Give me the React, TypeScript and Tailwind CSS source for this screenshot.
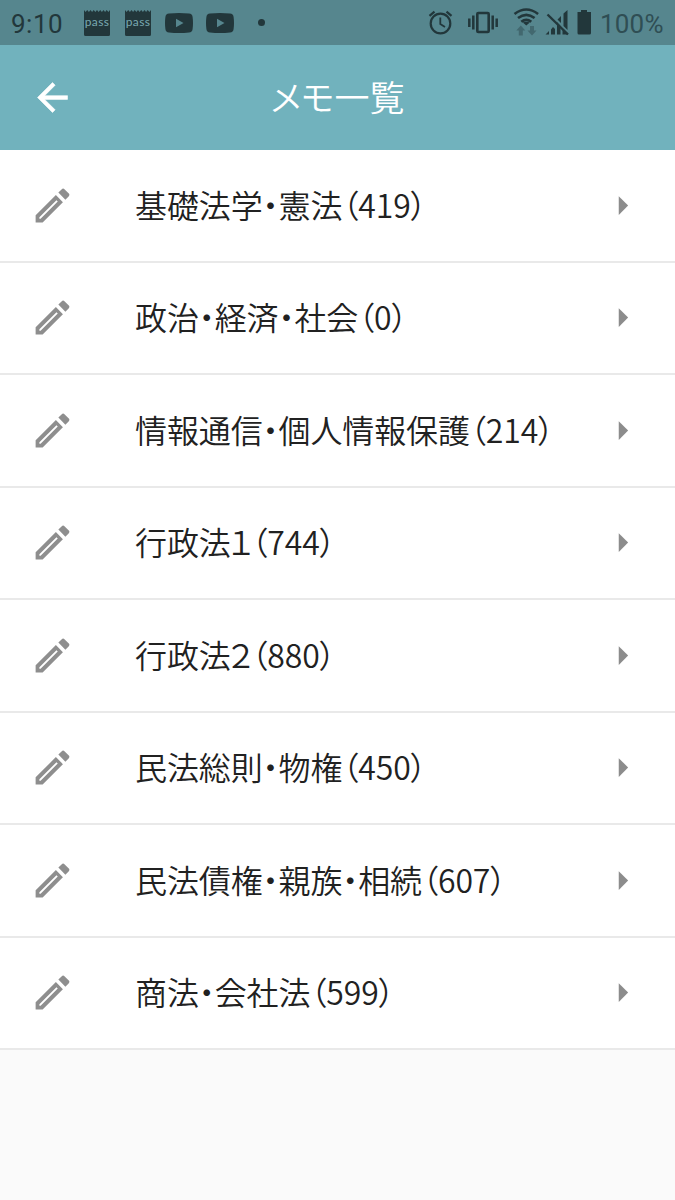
import React from 'react';

const memos = [
  { title: '基礎法学・憲法', count: 419 },
  { title: '政治・経済・社会', count: 0 },
  { title: '情報通信・個人情報保護', count: 214 },
  { title: '行政法', volume: '１', count: 744 },
  { title: '行政法', volume: '２', count: 880 },
  { title: '民法総則・物権', count: 450 },
  { title: '民法債権・親族・相続', count: 607 },
  { title: '商法・会社法', count: 599 },
];

const PassIcon: React.FC = () => (
  <div className="relative h-[26px] w-[26px]">
    <svg viewBox="0 0 26 26" className="h-[26px] w-[26px]" fill="currentColor">
      <path d="M0 0l1.600 2L3.200 0l1.700 2L6.500 0l1.600 2L9.700 0l1.700 2L13 0l1.600 2L16.200 0l1.700 2L19.500 0l1.600 2L22.700 0l1.700 2L26 0v24.500a1.500 1.500 0 0 1-1.500 1.500h-23A1.500 1.500 0 0 1 0 24.500z" />
    </svg>
    <span className="absolute inset-x-0 top-[4px] text-center font-['Lato'] text-[12px] leading-4 tracking-[0.300px] text-[#79aab2]">pass</span>
  </div>
);

const VideoIcon: React.FC = () => (
  <svg viewBox="0 0 28 20" className="h-5 w-7" fill="currentColor">
    <path fillRule="evenodd" d="M4 .5Q14-.5 24 .5Q27.300 .8 27.600 4Q28.400 10 27.600 16Q27.300 19.200 24 19.500Q14 20.500 4 19.500Q.7 19.200 .4 16Q-.4 10 .4 4Q.7 .8 4 .5zM11 5.800v8.400l7.500-4.200z" />
  </svg>
);

const StatusBar: React.FC = () => (
  <div className="flex h-[45px] items-center bg-[#56868e] pl-[11px] font-['Roboto',sans-serif] text-[26px] leading-none text-[#22373b]">
    <span className="w-[73px] pt-0.5 tracking-[0.5px]">9:10</span>
    <div className="flex items-center">
      <PassIcon />
      <div className="w-[15px]" />
      <PassIcon />
      <div className="w-[14px]" />
      <VideoIcon />
      <div className="w-[13px]" />
      <VideoIcon />
      <div className="ml-[24px] h-[7px] w-[7px] rounded-full bg-current" />
    </div>
    <svg viewBox="420 0 180 45" className="ml-auto h-[45px] w-[180px]" fill="none" stroke="currentColor">
      {/* alarm */}
      <circle cx="440.500" cy="23.500" r="9.800" strokeWidth="2.200" />
      <path d="M440.300 17.500v6.500l4.700 3" strokeWidth="1.800" />
      <path d="M429.500 15.800l5-4.200M451.500 15.800l-5-4.200" strokeWidth="2.200" />
      {/* vibrate */}
      <rect x="477.300" y="13" width="11.400" height="19" rx="1" strokeWidth="2.600" />
      <path d="M473.300 15.500v14M469.300 18.500v8.500M492.700 15.500v14M496.700 18.500v8.500" strokeWidth="2.500" />
      {/* wifi */}
      <path d="M514.500 14q11.800-9 23.600 0M518 18.100q8.300-6.500 16.600 0M521.300 21.700q5-3.800 10 0" strokeWidth="2.600" />
      <path d="M522.800 22.500q3.500-1.500 7 0l-3.500 3z" fill="currentColor" stroke="none" />
      <g fill="#42686f" stroke="none">
        <path d="M520.800 25.500l4.500 5h-2.500v5h-4v-5h-2.500z" />
        <path d="M532 35.500l4.500-5H534v-4.500h-4v4.500h-2.500z" />
      </g>
      {/* mobile signal */}
      <g fill="currentColor" stroke="none">
        <path d="M545.500 34.500l3.500-3.500v3.500zM551 34.500v-5l2-2.500 2 2v5.500zM557 34.500v-12.500l3.500 4v8.500zM557.500 19.500l3.500-3.500v7zM563.500 13.500l4-3.500v20l-4-4zM562.500 28l5 5v1.500h-5z" />
      </g>
      <path d="M547.500 14.500l20.500 20" strokeWidth="2.400" />
      {/* battery */}
      <path d="M577.500 12h3.500v-2h6v2h4v21a1.500 1.500 0 0 1-1.500 1.500h-10.500a1.500 1.500 0 0 1-1.500-1.500z" fill="currentColor" stroke="none" />
    </svg>
    <span className="w-[75px] pt-0.5 tracking-[0.200px] text-[#2f4e54]">100%</span>
  </div>
);

const PencilIcon: React.FC = () => (
  <svg viewBox="0 0 24 24" className="h-[45px] w-[45px]" fill="#8e8e8e">
    <path d="M13.800 6.450L3 17.250V21h3.750L17.550 10.200zM14.100 9.200l.7.7L5.650 19H5v-.7z" fillRule="evenodd" />
    <path d="M18.870 8.880l-3.750-3.750 1.840-1.840c.39-.39 1.020-.39 1.410 0l2.340 2.340c.39.390.39 1.020 0 1.410z" />
  </svg>
);

export default function App() {
  return (
    <div className="flex h-[1200px] w-[675px] flex-col overflow-hidden bg-[#fafafa] font-['Noto_Sans_CJK_JP',sans-serif]">
      <StatusBar />
      <header className="grid h-[105px] grid-cols-[104px_1fr_104px] items-center bg-[#71b2bd] text-white">
        <svg viewBox="0 0 24 24" className="ml-[30px] h-[45px] w-[45px]" fill="currentColor" stroke="currentColor" strokeWidth="0.300">
          <path d="M20 11H7.830l5.590-5.590L12 4l-8 8 8 8 1.410-1.410L7.830 13H20z" />
        </svg>
        <h1 className="pb-1 text-center text-[35px] font-[350] leading-none [font-feature-settings:'palt']">メモ一覧</h1>
      </header>
      <ul>
        {memos.map(({ title, volume, count }) => (
          <li key={title + count} className="flex h-[112.5px] items-center border-b-2 border-[#e9e9e9] bg-white pl-[30px] pr-[30px]">
            <PencilIcon />
            <span className="ml-[60px] flex-1 whitespace-nowrap pb-[3px] text-[32px] font-[350] leading-none tracking-[-0.1px] text-[#212121] [font-feature-settings:'palt']">
              {title}
              {volume && <span className="-ml-[2px] -mr-[1.5px]">{volume}</span>}
              （{count}）
            </span>
            <svg viewBox="0 0 24 24" className="h-[45px] w-[45px]" fill="#8c8c8c">
              <path d="M10 17l5-5-5-5z" />
            </svg>
          </li>
        ))}
      </ul>
    </div>
  );
}
